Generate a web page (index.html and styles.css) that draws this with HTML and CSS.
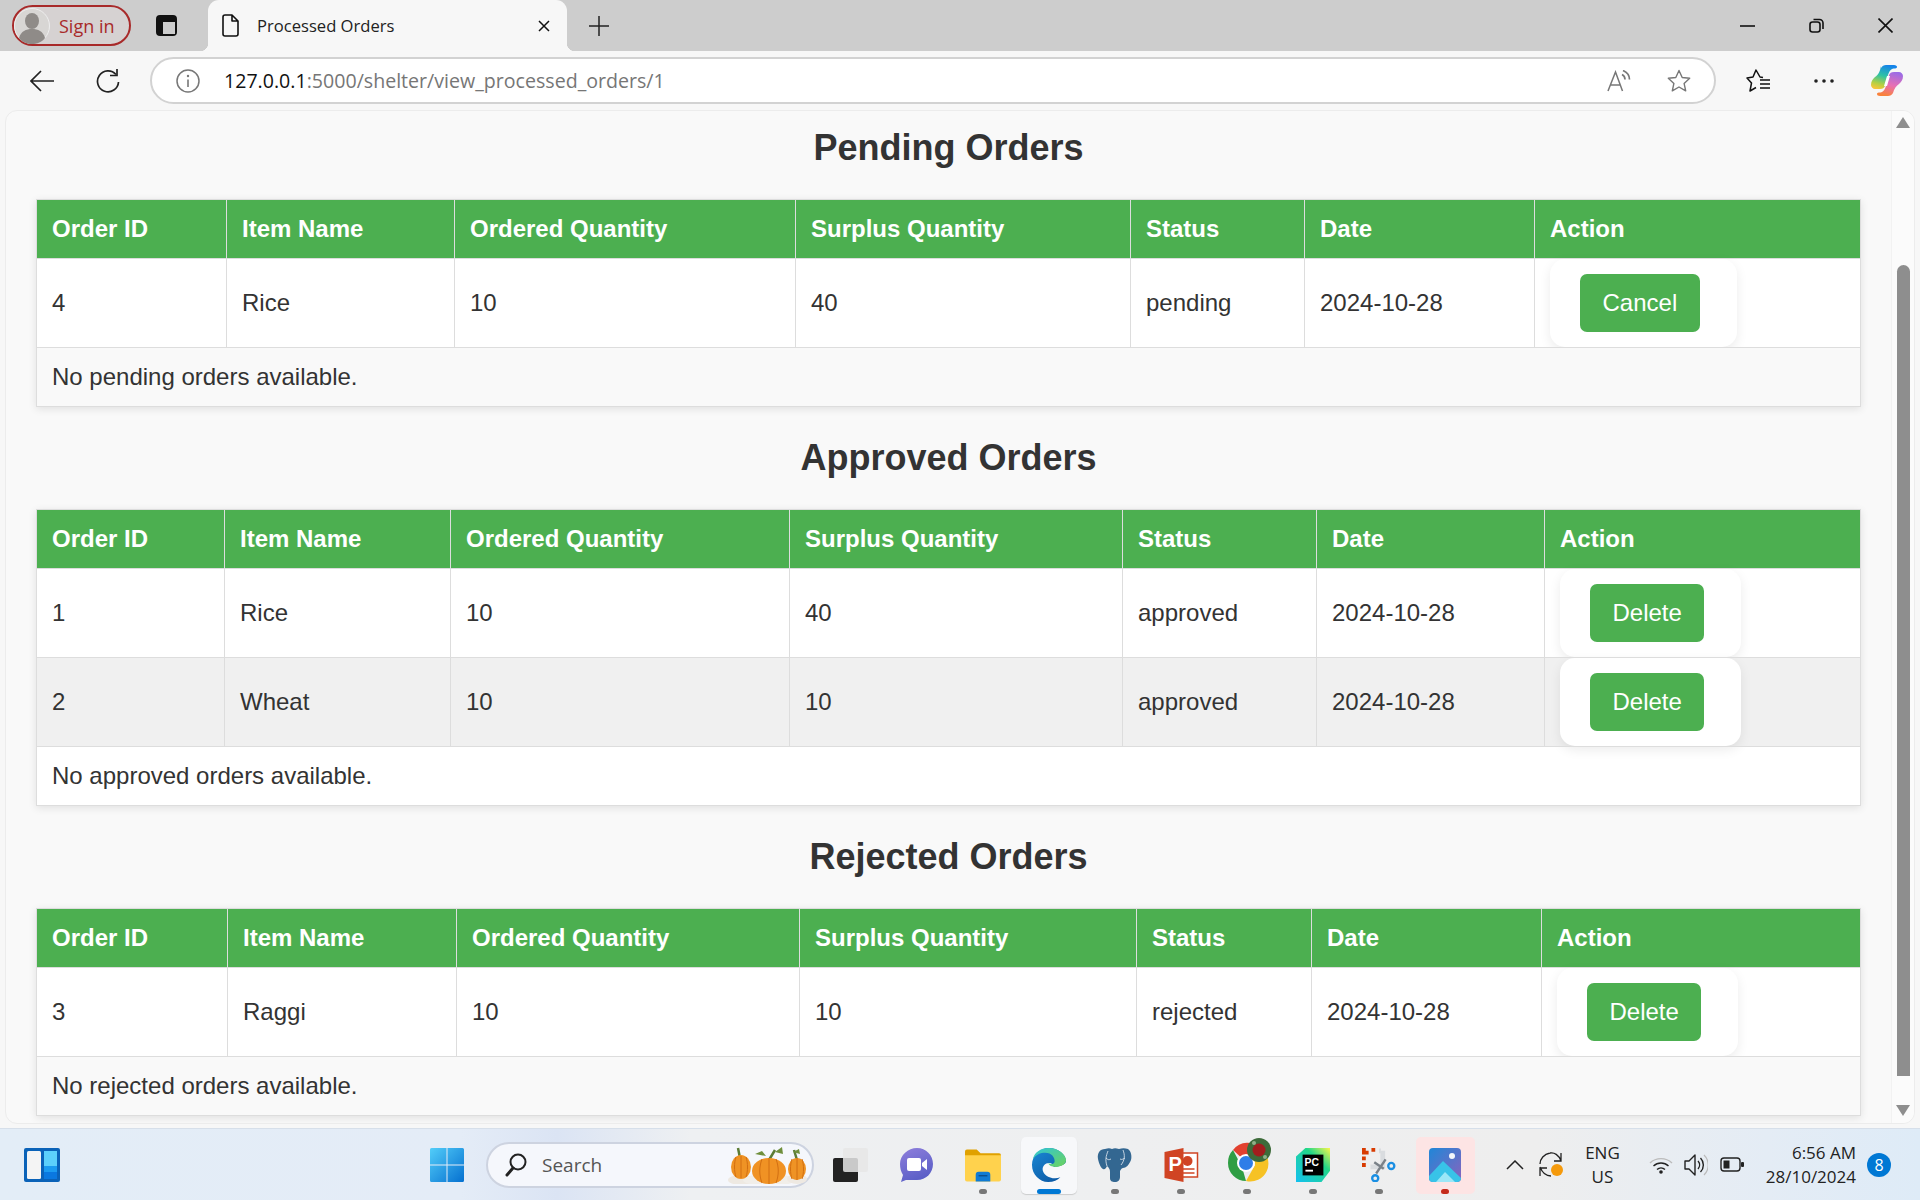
FILE: index.html
```html
<!DOCTYPE html>
<html lang="en">
<head>
<meta charset="UTF-8">
<title>Processed Orders</title>
<link rel="stylesheet" href="styles.css">
</head>
<body>

<div class="tabstrip">
  <div class="signin">
    <svg class="avatar" viewBox="0 0 36 36"><circle cx="18" cy="18" r="17.5" fill="#d8d6d4" stroke="#eee"/><ellipse cx="18" cy="13" rx="7" ry="8" fill="#8f8b88"/><path d="M5 30c2-7 7-9 13-9s11 2 13 9c-3 4-8 6-13 6s-10-2-13-6z" fill="#8f8b88"/></svg>
    <span>Sign in</span>
  </div>
  <svg class="ic-vtabs" viewBox="0 0 21 21"><rect x="1" y="1" width="19" height="19" rx="3" fill="none" stroke="#111" stroke-width="2"/><path d="M1 4a3 3 0 0 1 3-3h13a3 3 0 0 1 3 3v3H1zM1 7h6v13H4a3 3 0 0 1-3-3z" fill="#111"/><rect x="7" y="7" width="12" height="12" fill="#cdcdcd"/></svg>
  <div class="tab">
    <svg class="ic-doc" viewBox="0 0 17 23"><path d="M3 1h7l6 6v13a2 2 0 0 1-2 2H3a2 2 0 0 1-2-2V3a2 2 0 0 1 2-2zM10 1v6h6" fill="none" stroke="#111" stroke-width="1.6" stroke-linejoin="round"/></svg>
    <span class="tab-title">Processed Orders</span>
    <svg class="ic-close" viewBox="0 0 12 12"><path d="M1 1l10 10M11 1L1 11" stroke="#111" stroke-width="1.5"/></svg>
  </div>
  <svg class="ic-plus" viewBox="0 0 20 20"><path d="M10 0v20M0 10h20" stroke="#222" stroke-width="1.5"/></svg>
  <div class="winctl">
    <svg viewBox="0 0 15 15"><path d="M0 8h15" stroke="#111" stroke-width="1.6"/></svg>
    <svg viewBox="0 0 15 15"><rect x="1" y="4" width="10" height="10" rx="2.5" fill="none" stroke="#111" stroke-width="1.6"/><path d="M4.500 1.500h6a3.500 3.500 0 0 1 3.500 3.500v6" fill="none" stroke="#111" stroke-width="1.6"/></svg>
    <svg viewBox="0 0 15 15"><path d="M0.500 0.500l14 14M14.500 0.500l-14 14" stroke="#111" stroke-width="1.6"/></svg>
  </div>
</div>

<div class="toolbar">
  <svg class="ic-back" viewBox="0 0 24 22"><path d="M24 11H1M11 1L1 11l10 10" fill="none" stroke="#222" stroke-width="1.7"/></svg>
  <svg class="ic-reload" viewBox="0 0 24 24"><path d="M20 5.500A10.500 10.500 0 1 0 22.500 13" fill="none" stroke="#222" stroke-width="1.7"/><path d="M21 0v6.500h-7" fill="none" stroke="#222" stroke-width="1.7"/></svg>
  <div class="address">
    <svg class="ic-info" viewBox="0 0 24 24"><circle cx="12" cy="12" r="11" fill="none" stroke="#777" stroke-width="1.500"/><path d="M12 10.500V18" stroke="#777" stroke-width="1.600"/><circle cx="12" cy="7" r="1.200" fill="#777"/></svg>
    <span class="url"><b>127.0.0.1</b>:5000/shelter/view_processed_orders/1</span>
    <svg class="ic-read" viewBox="0 0 24 22"><path d="M1 21L8.500 2l7 19M3.500 15h10" fill="none" stroke="#777" stroke-width="1.500"/><path d="M15 4.500c2 1 3 3 3 5M16 0.500c3.500 1.500 6.500 4.500 6.500 9" fill="none" stroke="#777" stroke-width="1.700"/></svg>
    <svg class="ic-star" viewBox="0 0 24 23"><path d="M12 1.500l3.200 7 7.500.8-5.600 5.100 1.600 7.400-6.700-3.800-6.700 3.800 1.600-7.400L1.300 9.300l7.500-.8z" fill="none" stroke="#777" stroke-width="1.400" stroke-linejoin="round"/></svg>
  </div>
  <svg class="ic-favs" viewBox="0 0 24 24"><path d="M17 8.500l-3-.5-4-7-3 7-6 1 4.500 5L4 22l6-3.500M14 11h10M14 15h10M14 19h10" fill="none" stroke="#111" stroke-width="1.500" stroke-linejoin="round"/></svg>
  <svg class="ic-more" viewBox="0 0 20 4"><circle cx="2" cy="2" r="1.800" fill="#222"/><circle cx="10" cy="2" r="1.800" fill="#222"/><circle cx="18" cy="2" r="1.800" fill="#222"/></svg>
  <svg class="ic-copilot" viewBox="0 0 32 31">
    <defs>
      <linearGradient id="cpa" x1="0.600" y1="0" x2="0.300" y2="1"><stop offset="0" stop-color="#1583ea"/><stop offset="0.450" stop-color="#2fc3a4"/><stop offset="0.800" stop-color="#b5d042"/><stop offset="1" stop-color="#f4c63a"/></linearGradient>
      <linearGradient id="cpb" x1="0.700" y1="0" x2="0.400" y2="1"><stop offset="0" stop-color="#9a6ce6"/><stop offset="0.550" stop-color="#e86fb4"/><stop offset="1" stop-color="#f9823a"/></linearGradient>
    </defs>
    <path d="M10 3c1-2 3-3 5-3h8c2 0 3 1 3 2 0 2-3 1-5 2-2 1-3 3-4 6l-3 11c-1 2-2 3-5 3H4c-2 0-4-2-4-4 0-4 2-6 4-8 3-2 5-5 6-11z" fill="url(#cpa)"/>
    <path d="M22 28c-1 2-3 3-5 3H9c-2 0-3-1-3-2 0-2 3-1 5-2 2-1 3-3 4-6l3-11c1-2 2-3 5-3h5c2 0 4 2 4 4 0 4-2 6-4 8-3 2-5 5-6 9z" fill="url(#cpb)"/>
    <path d="M16 11h3l-3 10h-3z" fill="#fff"/>
  </svg>
</div>

<div class="viewport">
  <div class="content">

    <h2>Pending Orders</h2>
    <table class="orders pending">
      <colgroup><col class="c1"><col class="c2"><col class="c3"><col class="c4"><col class="c5"><col class="c6"><col class="c7"></colgroup>
      <thead>
        <tr><th>Order ID</th><th>Item Name</th><th>Ordered Quantity</th><th>Surplus Quantity</th><th>Status</th><th>Date</th><th>Action</th></tr>
      </thead>
      <tbody>
        <tr>
          <td>4</td><td>Rice</td><td>10</td><td>40</td><td>pending</td><td>2024-10-28</td>
          <td class="action"><div class="btn-card"><button class="btn">Cancel</button></div></td>
        </tr>
        <tr class="even"><td colspan="7">No pending orders available.</td></tr>
      </tbody>
    </table>

    <h2>Approved Orders</h2>
    <table class="orders approved">
      <colgroup><col class="c1"><col class="c2"><col class="c3"><col class="c4"><col class="c5"><col class="c6"><col class="c7"></colgroup>
      <thead>
        <tr><th>Order ID</th><th>Item Name</th><th>Ordered Quantity</th><th>Surplus Quantity</th><th>Status</th><th>Date</th><th>Action</th></tr>
      </thead>
      <tbody>
        <tr>
          <td>1</td><td>Rice</td><td>10</td><td>40</td><td>approved</td><td>2024-10-28</td>
          <td class="action"><div class="btn-card"><button class="btn">Delete</button></div></td>
        </tr>
        <tr class="hovered">
          <td>2</td><td>Wheat</td><td>10</td><td>10</td><td>approved</td><td>2024-10-28</td>
          <td class="action"><div class="btn-card"><button class="btn">Delete</button></div></td>
        </tr>
        <tr><td colspan="7">No approved orders available.</td></tr>
      </tbody>
    </table>

    <h2>Rejected Orders</h2>
    <table class="orders rejected">
      <colgroup><col class="c1"><col class="c2"><col class="c3"><col class="c4"><col class="c5"><col class="c6"><col class="c7"></colgroup>
      <thead>
        <tr><th>Order ID</th><th>Item Name</th><th>Ordered Quantity</th><th>Surplus Quantity</th><th>Status</th><th>Date</th><th>Action</th></tr>
      </thead>
      <tbody>
        <tr>
          <td>3</td><td>Raggi</td><td>10</td><td>10</td><td>rejected</td><td>2024-10-28</td>
          <td class="action"><div class="btn-card"><button class="btn">Delete</button></div></td>
        </tr>
        <tr class="even"><td colspan="7">No rejected orders available.</td></tr>
      </tbody>
    </table>

  </div>
  <div class="scrollbar">
    <div class="arrow-up"></div>
    <div class="thumb"></div>
    <div class="arrow-down"></div>
  </div>
</div>

<div class="taskbar">
  <svg class="ic-widgets" viewBox="0 0 36 34"><rect width="36" height="34" rx="2" fill="#0a62b8"/><rect x="3" y="3" width="14" height="28" rx="1.500" fill="#f4f4f4"/><rect x="20" y="3" width="13" height="15" fill="#5cd0fb"/><rect x="20" y="18" width="13" height="6" fill="#1b9bf0"/><rect x="20" y="24" width="13" height="7" fill="#0a78e0"/></svg>
  <svg class="ic-start" viewBox="0 0 34 34">
    <defs><linearGradient id="win" x1="0" y1="0" x2="1" y2="1"><stop offset="0" stop-color="#52cdf9"/><stop offset="1" stop-color="#0570d0"/></linearGradient></defs>
    <path d="M0 1.500A1.500 1.500 0 0 1 1.500 0H16.500V16.500H0zM17.500 0H32.500A1.500 1.500 0 0 1 34 1.500V16.500H17.500zM0 17.500H16.500V34H1.500A1.500 1.500 0 0 1 0 32.500zM17.500 17.500H34V32.500A1.500 1.500 0 0 1 32.500 34H17.500z" fill="url(#win)"/>
  </svg>
  <div class="search">
    <svg class="ic-glass" viewBox="0 0 22 24"><circle cx="13" cy="9" r="7.500" fill="none" stroke="#222" stroke-width="2"/><path d="M8 15l-6 7" stroke="#222" stroke-width="3" stroke-linecap="round"/></svg>
    <span>Search</span>
    <svg class="ic-pumpkins" viewBox="0 0 80 38">
      <ellipse cx="14" cy="34" rx="13" ry="5" fill="#eee9e2"/><ellipse cx="42" cy="34" rx="26" ry="6" fill="#f1eee9"/><ellipse cx="70" cy="33" rx="10" ry="5" fill="#eee9e2"/>
      <path d="M13 12l-2-10M42 14l6-10M70 14l-3-10" stroke="#5c7c35" stroke-width="2.500" fill="none"/>
      <path d="M28 8l7-3 4 5zM48 6l7-5 1 7zM66 6l6-3 1 5z" fill="#6f8f3c"/>
      <ellipse cx="14" cy="21" rx="10" ry="12" fill="#ef9325"/><path d="M14 10v22M9 11c-2 6-2 14 0 20M19 11c2 6 2 14 0 20" stroke="#d26f12" fill="none"/>
      <ellipse cx="42" cy="25" rx="17" ry="13" fill="#f09224"/><path d="M42 12v26M35 13c-3 8-3 16 0 24M49 13c3 8 3 16 0 24" stroke="#d26f12" fill="none"/>
      <ellipse cx="70" cy="23" rx="9" ry="11" fill="#ef9325"/><path d="M70 12v22M65 13c-2 6-2 14 0 20M75 13c2 6 2 14 0 20" stroke="#d26f12" fill="none"/>
    </svg>
  </div>
  <div class="apps">
    <div class="app">
      <svg class="app-ic" viewBox="0 0 36 34"><rect x="0" y="10" width="25" height="24" rx="2" fill="#222"/><rect x="10" y="0" width="25" height="24" rx="2" fill="#e6e6e6" opacity="0.850"/></svg>
    </div>
    <div class="app">
      <svg class="app-ic" viewBox="0 0 34 34">
        <defs><linearGradient id="meet" x1="0" y1="0" x2="0.400" y2="1"><stop offset="0" stop-color="#8f7fdc"/><stop offset="1" stop-color="#5b5fc7"/></linearGradient></defs>
        <path d="M17 0c9 0 16 7 16 16s-7 16-16 16H6l-5 2 2-7C1 24 0 20 0 16 0 7 8 0 17 0z" fill="url(#meet)"/><rect x="7" y="10" width="14" height="13" rx="2" fill="#fff"/><path d="M22 15l5-4v11l-5-4z" fill="#fff"/>
      </svg>
    </div>
    <div class="app dot">
      <svg class="app-ic" viewBox="0 0 37 34"><path d="M0 3a2 2 0 0 1 2-2h10l4 4h19a2 2 0 0 1 2 2v6H0z" fill="#e0a100"/><path d="M0 7h37v25a2 2 0 0 1-2 2H2a2 2 0 0 1-2-2z" fill="#ffd24d"/><path d="M11 34v-7a3 3 0 0 1 3-3h9a3 3 0 0 1 3 3v7z" fill="#0f7bd4"/><path d="M14 28h9" stroke="#0a4f8f" stroke-width="1.500"/></svg>
    </div>
    <div class="app active">
      <svg class="app-ic" viewBox="0 0 36 36">
        <defs>
          <linearGradient id="edg" x1="0" y1="0" x2="1" y2="1"><stop offset="0" stop-color="#2fc5d8"/><stop offset="1" stop-color="#6dd35c"/></linearGradient>
          <linearGradient id="edb" x1="0" y1="0" x2="0.700" y2="1"><stop offset="0" stop-color="#1b8ad6"/><stop offset="1" stop-color="#0c5aa6"/></linearGradient>
        </defs>
        <path d="M18 0C8 0 0 8 0 18c0 10 8 18 17 18 6 0 10-2 13-5-5 2-11 1-15-2-4-3-5-8-2-11 1-1 3-2 5-2 3 0 5 2 5 4 4 0 7-1 9-2 3-1 4-3 4-4C36 7 28 0 18 0z" fill="url(#edb)"/>
        <path d="M18 0C9 0 2 5 1 12c3-5 8-7 13-7 7 0 10 5 10 9 0 2-2 3-4 3s-3-1-3-1c1 3 4 4 8 4 6 0 11-3 11-7C36 7 28 0 18 0z" fill="url(#edg)"/>
      </svg>
    </div>
    <div class="app dot">
      <svg class="app-ic" viewBox="0 0 34 34"><path d="M7 1C2 1-1 5 0 11c1 5 3 9 5 10 2 1 3-1 4-3 2 2 3 3 3 6v6c0 3 2 4 5 4s5-2 5-5v-6c1-2 2-3 3-3 3 0 6-3 8-8 1-4 0-9-3-11-3-1-6-1-9 0-3-1-5-1-7 0-2-1-4-1-7 0z" fill="#336791"/><path d="M10 3c-2 5-3 9-1 15M25 2c2 5 2 10-2 15M8 10c2 2 3 2 5 1M22 11c2 1 3 0 5-1" stroke="#e8eef4" stroke-width="0.800" fill="none"/></svg>
    </div>
    <div class="app dot">
      <svg class="app-ic" viewBox="0 0 33 34"><rect x="14" y="5" width="19" height="24" fill="#fff" stroke="#d04423" stroke-width="1.500"/><circle cx="23" cy="13" r="5" fill="#d04423"/><path d="M17 21h13M17 25h13" stroke="#d04423" stroke-width="1.500"/><path d="M0 4l19-4v34L0 30z" fill="#d04423"/><text x="4" y="23" class="ppt-letter">P</text></svg>
    </div>
    <div class="app dot">
      <svg class="app-ic ic-chrome" viewBox="0 0 44 44">
        <path d="M19 24L6 12a18 18 0 0 1 28-1l-1 1z" fill="#e2402f"/><path d="M1 25A18 18 0 0 1 6 12l9 17 4 14A18 18 0 0 1 1 25z" fill="#2f9e44"/><path d="M34 11a18 18 0 0 1-15 32l9-16-5-13z" fill="#f6c224"/>
        <circle cx="19" cy="25" r="9" fill="#fff"/><circle cx="19" cy="25" r="7" fill="#2f7de8"/>
        <circle cx="32" cy="12" r="12" fill="#3d6b3a"/><circle cx="32" cy="12" r="6.500" fill="#a21d1d"/><circle cx="27" cy="5" r="2" fill="#8fb08a"/><circle cx="38" cy="19" r="2" fill="#8fb08a"/>
      </svg>
    </div>
    <div class="app dot">
      <svg class="app-ic" viewBox="0 0 36 36">
        <defs><linearGradient id="pyc" x1="0" y1="1" x2="1" y2="0"><stop offset="0" stop-color="#13c0f0"/><stop offset="0.650" stop-color="#21d789"/><stop offset="1" stop-color="#fcf84a"/></linearGradient></defs>
        <path d="M0 9l10-9h26v24l-9 12H0z" fill="url(#pyc)"/><rect x="7" y="7" width="22" height="22" fill="#000"/><text x="9" y="19" class="pc-letters">PC</text><rect x="10" y="23" width="8" height="2" fill="#fff"/>
      </svg>
    </div>
    <div class="app dot">
      <svg class="app-ic" viewBox="0 0 36 36"><path d="M2 0v5H7M10 2h4M2 9v4M2 16v4" stroke="#d83b01" stroke-width="4" fill="none"/><path d="M20 3h-2M22 3v17H9" stroke="#d9dcdf" stroke-width="5" fill="none"/><path d="M13 15l10 7M25 12L15 27" stroke="#7a8188" stroke-width="2.500"/><circle cx="31" cy="19" r="3.200" fill="none" stroke="#1a8fe3" stroke-width="2.500"/><circle cx="14" cy="32" r="3.200" fill="none" stroke="#1a8fe3" stroke-width="2.500"/></svg>
    </div>
    <div class="app running">
      <svg class="app-ic" viewBox="0 0 32 34">
        <defs><linearGradient id="pht" x1="0" y1="0" x2="1" y2="1"><stop offset="0" stop-color="#1f87d8"/><stop offset="1" stop-color="#8a63bd"/></linearGradient></defs>
        <rect width="32" height="34" rx="4" fill="url(#pht)"/><circle cx="23" cy="8" r="3" fill="#f3f7fb"/><path d="M0 28l14-15 18 17v0a4 4 0 0 1-4 4H4a4 4 0 0 1-4-4z" fill="#38c3e8"/><path d="M7 34l9-10 10 10z" fill="#9be7f7"/>
      </svg>
    </div>
  </div>
  <div class="tray">
    <svg class="ic-chevron" viewBox="0 0 18 10"><path d="M1 9l8-8 8 8" fill="none" stroke="#222" stroke-width="1.500"/></svg>
    <svg class="ic-sync" viewBox="0 0 24 25"><path d="M22 9C20 3 15 0 11 1 5 2 1 7 1 12M22 1v8h-7M1 15c2 5 6 9 11 9M1 24v-8h7" fill="none" stroke="#222" stroke-width="1.300"/><circle cx="18" cy="18" r="6" fill="#f59a0c"/></svg>
    <div class="lang">ENG<br>US</div>
    <svg class="ic-wifi" viewBox="0 0 24 18"><path d="M1 7a16 16 0 0 1 22 0" fill="none" stroke="#bbb" stroke-width="1.400"/><path d="M4.500 10a11 11 0 0 1 15 0M8 13.500a6 6 0 0 1 8 0" fill="none" stroke="#222" stroke-width="1.400"/><circle cx="12" cy="16" r="1.800" fill="#222"/></svg>
    <svg class="ic-speaker" viewBox="0 0 24 24"><path d="M1 8h4l6-6v20l-6-6H1z" fill="none" stroke="#222" stroke-width="1.400" stroke-linejoin="round"/><path d="M14 8a6 6 0 0 1 0 8M16.500 5a10 10 0 0 1 0 14" fill="none" stroke="#222" stroke-width="1.400"/><path d="M20 2a14 14 0 0 1 0 20" fill="none" stroke="#bbb" stroke-width="1.200"/></svg>
    <svg class="ic-battery" viewBox="0 0 24 15"><rect x="1" y="1" width="19" height="13" rx="3" fill="none" stroke="#222" stroke-width="1.400"/><rect x="3.500" y="3.500" width="6" height="8" fill="#222"/><rect x="21" y="5" width="3" height="5" rx="1" fill="#222"/></svg>
    <div class="clock">6:56 AM<br>28/10/2024</div>
    <div class="badge">8</div>
  </div>
</div>

</body>
</html>
```

FILE: styles.css
```css
body {
  margin: 0;
  height: 1200px;
  overflow: hidden;
  display: flex;
  flex-direction: column;
  font-family: "Liberation Sans", Arial, sans-serif;
  background-color: #f7f7f7;
  color: #333;
}

svg {
  display: block;
  flex-shrink: 0;
}

/* browser tab strip */
.tabstrip {
  height: 51px;
  background-color: #cdcdcd;
  display: flex;
  align-items: center;
  padding-left: 12px;
  font-family: "Open Sans", sans-serif;
}

.signin {
  width: 119px;
  height: 41px;
  box-sizing: border-box;
  border: 2px solid #a82a2a;
  border-radius: 21px;
  display: flex;
  align-items: center;
  gap: 9px;
  color: #a82a2a;
  font-size: 18px;
  background-color: #d6d2d2;
}

.avatar {
  width: 36px;
  height: 36px;
}

.ic-vtabs {
  width: 21px;
  height: 21px;
  margin-left: 25px;
}

.tab {
  position: relative;
  width: 359px;
  height: 51px;
  box-sizing: border-box;
  margin-left: 31px;
  padding: 0 17px 0 14px;
  background-color: #f7f7f7;
  border-radius: 11px 11px 0 0;
  display: flex;
  align-items: center;
  font-size: 16.6px;
  color: #222;
}

.tab::before,
.tab::after {
  content: "";
  position: absolute;
  bottom: 0;
  width: 8px;
  height: 8px;
}

.tab::before {
  left: -8px;
  background: radial-gradient(circle at 0 0, #cdcdcd 8px, #f7f7f7 8.5px);
}

.tab::after {
  right: -8px;
  background: radial-gradient(circle at 100% 0, #cdcdcd 8px, #f7f7f7 8.5px);
}

.ic-doc {
  width: 17px;
  height: 23px;
}

.tab-title {
  margin-left: 18px;
  flex: 1;
}

.ic-close {
  width: 12px;
  height: 12px;
}

.ic-plus {
  width: 20px;
  height: 20px;
  margin-left: 22px;
}

.winctl {
  margin-left: auto;
  padding-right: 27px;
  display: flex;
  gap: 54px;
}

.winctl svg {
  width: 15px;
  height: 15px;
}

/* address bar row */
.toolbar {
  height: 59px;
  display: flex;
  align-items: center;
  padding-left: 30px;
}

.ic-back {
  width: 24px;
  height: 22px;
}

.ic-reload {
  width: 24px;
  height: 24px;
  margin-left: 42px;
}

.address {
  width: 1566px;
  height: 47px;
  box-sizing: border-box;
  margin-left: 30px;
  padding: 0 23px 0 24px;
  background-color: #fff;
  border: 2px solid #d2d2d2;
  border-radius: 24px;
  display: flex;
  align-items: center;
}

.ic-info {
  width: 24px;
  height: 24px;
}

.url {
  margin-left: 24px;
  font-family: "Open Sans", sans-serif;
  font-size: 19.6px;
  color: #767676;
  flex: 1;
}

.url b {
  font-weight: normal;
  color: #111;
}

.ic-read {
  width: 24px;
  height: 22px;
}

.ic-star {
  width: 24px;
  height: 23px;
  margin-left: 36px;
}

.ic-favs {
  width: 24px;
  height: 24px;
  margin-left: 30px;
}

.ic-more {
  width: 20px;
  height: 4px;
  margin-left: 44px;
}

.ic-copilot {
  width: 32px;
  height: 31px;
  margin-left: 37px;
}

/* page area */
.viewport {
  height: 1014px;
  margin: 0 5px 0 5px;
  box-sizing: border-box;
  background-color: #f9f9f9;
  border: 1px solid #ececec;
  border-radius: 12px;
  display: flex;
  overflow: hidden;
}

.content {
  flex: 1;
  padding: 16px 30px 0 30px;
  min-width: 0;
}

h2 {
  margin: 0 0 30.3px 0;
  font-size: 36px;
  font-weight: bold;
  text-align: center;
  color: #333;
}

.orders {
  width: 1824px;
  table-layout: fixed;
  border-collapse: collapse;
  margin-bottom: 30px;
  background-color: #fff;
  box-shadow: 0 2px 8px rgba(0, 0, 0, 0.1);
  font-size: 24px;
}

.orders th,
.orders td {
  padding: 15px;
  border: 1px solid #ddd;
  text-align: left;
}

.orders th {
  background-color: #4caf50;
  color: #fff;
  font-weight: bold;
}

.orders .even td {
  background-color: #f9f9f9;
}

.orders .hovered td {
  background-color: #f0f0f0;
}

.orders .action {
  padding: 0 15px;
}

.pending .c1 { width: 190px; }
.pending .c2 { width: 228px; }
.pending .c3 { width: 341px; }
.pending .c4 { width: 335px; }
.pending .c5 { width: 174px; }
.pending .c6 { width: 230px; }
.pending .c7 { width: 326px; }

/* second table sits a little tighter under its heading */
.approved {
  margin-top: -1px;
}

.approved .c1 { width: 188px; }
.approved .c2 { width: 226px; }
.approved .c3 { width: 339px; }
.approved .c4 { width: 333px; }
.approved .c5 { width: 194px; }
.approved .c6 { width: 228px; }
.approved .c7 { width: 316px; }

.rejected .c1 { width: 191px; }
.rejected .c2 { width: 229px; }
.rejected .c3 { width: 343px; }
.rejected .c4 { width: 337px; }
.rejected .c5 { width: 175px; }
.rejected .c6 { width: 230px; }
.rejected .c7 { width: 319px; }

.btn-card {
  width: fit-content;
  padding: 15px 37px 15px 30px;
  background-color: #fff;
  border-radius: 15px;
  box-shadow: 0 4px 12px rgba(0, 0, 0, 0.08);
}

.btn {
  display: block;
  padding: 15px 22.5px;
  font-family: inherit;
  font-size: 24px;
  color: #fff;
  background-color: #4caf50;
  border: none;
  border-radius: 7px;
}

/* page scrollbar */
.scrollbar {
  width: 23px;
  background-color: #fbfbfb;
  border-left: 1px solid #f2f2f2;
  box-sizing: border-box;
  display: flex;
  flex-direction: column;
  align-items: center;
}

.arrow-up,
.arrow-down {
  width: 0;
  height: 0;
  border-left: 7px solid transparent;
  border-right: 7px solid transparent;
}

.arrow-up {
  margin-top: 6px;
  border-bottom: 11px solid #8e8e8e;
}

.arrow-down {
  border-top: 11px solid #8e8e8e;
  margin-top: 29px;
}

.thumb {
  width: 13px;
  height: 811px;
  margin-top: 137px;
  background-color: #8e8e8e;
  border-radius: 7px 7px 0 0;
}

/* windows taskbar */
.taskbar {
  margin-top: 4px;
  height: 72px;
  box-sizing: border-box;
  border-top: 1px solid #d6dfea;
  background: linear-gradient(to right, #e3edf7 0, #e4ecf7 24%, #dbe4f4 29%, #eef0f2 36%, #eeeeee 80%, #e4ecf5 92%, #deebf7 100%);
  display: flex;
  align-items: center;
  padding-left: 24px;
  font-family: "Open Sans", sans-serif;
  position: relative;
}

.ic-widgets {
  width: 36px;
  height: 34px;
}

.ic-start {
  width: 34px;
  height: 34px;
  margin-left: 370px;
}

.search {
  width: 328px;
  height: 46px;
  box-sizing: border-box;
  margin-left: 22px;
  padding: 0 5px 0 17px;
  background-color: #f5f7fc;
  border: 2px solid #cdd3e0;
  border-radius: 23px;
  display: flex;
  align-items: center;
  font-size: 19px;
  color: #555;
}

.ic-glass {
  width: 22px;
  height: 24px;
}

.search span {
  margin-left: 15px;
  flex: 1;
}

.ic-pumpkins {
  width: 80px;
  height: 38px;
}

.apps {
  display: flex;
  margin-left: 4px;
}

.app {
  width: 66px;
  height: 71px;
  position: relative;
  display: flex;
  align-items: center;
  justify-content: center;
}

.app-ic {
  width: 36px;
  height: 34px;
}

.ic-chrome {
  width: 44px;
  height: 44px;
  margin-top: -9px;
  margin-left: 4px;
}

.dot::after,
.active::after,
.running::after {
  content: "";
  position: absolute;
  bottom: 6px;
  left: 29px;
  width: 8px;
  height: 5px;
  border-radius: 3px;
  background-color: #777;
}

.active::before {
  content: "";
  position: absolute;
  top: 8px;
  left: 5px;
  width: 56px;
  height: 57px;
  border-radius: 5px;
  background-color: #f7f8fa;
  box-shadow: 0 1px 1px rgba(0, 0, 0, 0.15);
}

.active .app-ic {
  position: relative;
}

.active::after {
  left: 21px;
  width: 24px;
  background-color: #0078d4;
}

.running::before {
  content: "";
  position: absolute;
  top: 8px;
  left: 4px;
  width: 59px;
  height: 57px;
  border-radius: 5px;
  background-color: #fde4e4;
}

.running .app-ic {
  position: relative;
}

.running::after {
  background-color: #c42b1c;
}

.ppt-letter {
  font-family: "Liberation Sans", sans-serif;
  font-size: 20px;
  font-weight: bold;
  fill: #fff;
}

.pc-letters {
  font-family: "Liberation Sans", sans-serif;
  font-size: 11px;
  font-weight: bold;
  fill: #fff;
}

.tray {
  margin-left: auto;
  padding-right: 29px;
  display: flex;
  align-items: center;
  font-size: 17px;
  color: #222;
  line-height: 24px;
}

.ic-chevron {
  width: 18px;
  height: 10px;
}

.ic-sync {
  width: 24px;
  height: 25px;
  margin-left: 15px;
}

.lang {
  margin-left: 22px;
  text-align: center;
}

.ic-wifi {
  width: 24px;
  height: 18px;
  margin-left: 29px;
}

.ic-speaker {
  width: 24px;
  height: 24px;
  margin-left: 11px;
}

.ic-battery {
  width: 24px;
  height: 15px;
  margin-left: 12px;
}

.clock {
  margin-left: 22px;
  text-align: right;
}

.badge {
  width: 24px;
  height: 24px;
  margin-left: 11px;
  border-radius: 50%;
  background-color: #0078d4;
  color: #fff;
  font-size: 16px;
  text-align: center;
}
```
